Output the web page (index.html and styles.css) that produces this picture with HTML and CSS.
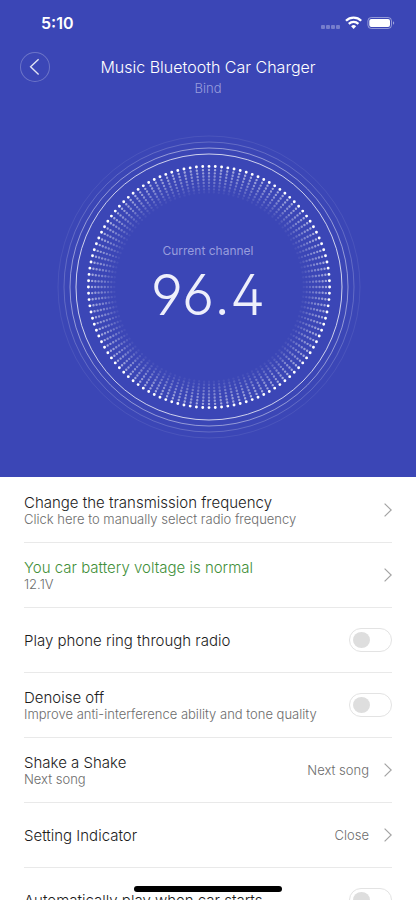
FILE: index.html
```html
<!DOCTYPE html>
<html lang="en">
<head>
<meta charset="utf-8">
<meta name="viewport" content="width=device-width, initial-scale=1">
<title>Music Bluetooth Car Charger</title>
<link rel="stylesheet" href="styles.css">
</head>
<body>
<header class="hero">
  <div class="status">
    <span class="clock">5:10</span>
    <svg class="status-icons" width="76" height="16" viewBox="0 0 76 16" aria-hidden="true">
      <g fill="#fff" fill-opacity=".3"><rect x="1" y="10" width="4" height="4" rx="1"/><rect x="6" y="10" width="4" height="4" rx="1"/><rect x="11" y="10" width="4" height="4" rx="1"/><rect x="16" y="10" width="4" height="4" rx="1"/></g>
      <g fill="none" stroke="#fff" stroke-width="2.3"><path d="M26 5.7a10.9 10.9 0 0 1 15.2 0"/><path d="M28.8 8.8a6.9 6.9 0 0 1 9.6 0"/></g>
      <path fill="#fff" d="M33.6 14l-2.5-2.7a3.6 3.6 0 0 1 5 0z"/>
      <rect x="47.9" y="2.5" width="23.6" height="11" rx="3.4" fill="none" stroke="#fff" stroke-opacity=".45"/>
      <rect x="49.3" y="4" width="20.7" height="8" rx="2" fill="#fff"/>
      <path d="M73 6.2q1.2.5 1.2 1.8T73 9.8z" fill="#fff" fill-opacity=".5"/>
    </svg>
  </div>
  <div class="titlebar">
    <button class="back" type="button" aria-label="Back">
      <svg width="30" height="30" viewBox="0 0 30 30" aria-hidden="true"><path d="M18.6 7.2L10.6 14.8l8 7.6" fill="none" stroke="#fff" stroke-opacity=".85" stroke-width="1.4"/></svg>
    </button>
    <div class="heading">
      <h1>Music Bluetooth Car Charger</h1>
      <p>Bind</p>
    </div>
  </div>
  <div class="dial">
    <svg class="rings" viewBox="-154 -153 306 306" aria-hidden="true">
      <g fill="none" stroke="#fff">
        <circle r="133" stroke-opacity=".75"/>
        <circle r="139" stroke-opacity=".45"/>
        <circle r="145" stroke-opacity=".2"/>
        <circle r="151" stroke-opacity=".08"/>
      </g>
      <g class="dots">
        <circle r="120.6" pathLength="120" class="lit"/>
        <circle r="117" pathLength="120" stroke-opacity=".52"/>
        <circle r="113.8" pathLength="120" stroke-opacity=".46"/>
        <circle r="110.6" pathLength="120" stroke-opacity=".4"/>
        <circle r="107.4" pathLength="120" stroke-opacity=".34"/>
        <circle r="104.2" pathLength="120" stroke-opacity=".28"/>
        <circle r="101" pathLength="120" stroke-opacity=".2"/>
        <circle r="97.8" pathLength="120" stroke-opacity=".13"/>
        <circle r="94.8" pathLength="120" stroke-opacity=".06"/>
      </g>
    </svg>
    <div class="reading">
      <span class="caption">Current channel</span>
      <span class="channel">96.4</span>
    </div>
  </div>
</header>
<main class="settings">
  <a class="row" href="#frequency">
    <span class="label"><span class="name">Change the transmission frequency</span><span class="note">Click here to manually select radio frequency</span></span>
    <svg class="chevron" viewBox="0 0 8 14" aria-hidden="true"><path d="M.6.6L7.2 7 .6 13.4"/></svg>
  </a>
  <a class="row" href="#battery">
    <span class="label"><span class="name good">You car battery voltage is normal</span><span class="note">12.1V</span></span>
    <svg class="chevron" viewBox="0 0 8 14" aria-hidden="true"><path d="M.6.6L7.2 7 .6 13.4"/></svg>
  </a>
  <label class="row" for="ring">
    <span class="label"><span class="name">Play phone ring through radio</span></span>
    <input class="switch" type="checkbox" id="ring">
  </label>
  <label class="row" for="denoise">
    <span class="label"><span class="name">Denoise off</span><span class="note">Improve anti-interference ability and tone quality</span></span>
    <input class="switch" type="checkbox" id="denoise">
  </label>
  <a class="row" href="#shake">
    <span class="label"><span class="name">Shake a Shake</span><span class="note">Next song</span></span>
    <span class="value">Next song</span>
    <svg class="chevron" viewBox="0 0 8 14" aria-hidden="true"><path d="M.6.6L7.2 7 .6 13.4"/></svg>
  </a>
  <a class="row" href="#indicator">
    <span class="label"><span class="name">Setting Indicator</span></span>
    <span class="value">Close</span>
    <svg class="chevron" viewBox="0 0 8 14" aria-hidden="true"><path d="M.6.6L7.2 7 .6 13.4"/></svg>
  </a>
  <label class="row" for="autoplay">
    <span class="label"><span class="name">Automatically play when car starts</span></span>
    <input class="switch" type="checkbox" id="autoplay">
  </label>
</main>
<div class="home-indicator"></div>
</body>
</html>
```
FILE: styles.css
```css
* { box-sizing: border-box; }
html, body { height: 100%; }
body {
  margin: 0;
  overflow: hidden;
  background: #fff;
  color: #1c1c1c;
  font-family: Inter, "Liberation Sans", sans-serif;
  font-weight: 300;
}
h1, p { margin: 0; font-weight: 300; }

.hero { background: #3b46b6; color: #fff; padding-bottom: 37px; }
.status {
  display: flex;
  justify-content: space-between;
  align-items: center;
  height: 46px;
  padding: 0 20px 0 41px;
}
.clock { font-size: 16px; font-weight: 600; line-height: 20px; }
.titlebar {
  display: grid;
  grid-template-columns: 30px 1fr 30px;
  align-items: start;
  padding: 6px 20px 0;
}
.back {
  width: 30px;
  height: 30px;
  padding: 0;
  border: 0;
  border-radius: 50%;
  background: none;
  box-shadow: inset 0 0 0 1px rgba(255, 255, 255, .25);
}
.back svg { display: block; }
.heading { text-align: center; padding-top: 4px; }
.heading h1 { font-size: 16px; line-height: 22px; color: #fff; }
.heading p { font-size: 13px; line-height: 20px; color: #989ddd; }

.dial {
  display: grid;
  place-items: center;
  width: 306px;
  margin: 36px auto 0;
}
.rings, .reading { grid-area: 1 / 1; }
.rings { display: block; width: 100%; }
.dots circle {
  fill: none;
  stroke: #fff;
  stroke-width: 2.4;
  stroke-linecap: round;
  stroke-dasharray: 0 1;
}
.dots .lit { stroke-width: 2.9; }
.reading { display: flex; flex-direction: column; align-items: center; }
.caption { font-size: 12px; line-height: 16px; font-weight: 400; color: #989ddd; }
.channel {
  font-size: 56px;
  line-height: 72px;
  color: #eeeffb;
  font-feature-settings: "cv02", "cv03", "cv04";
}

.settings { padding: 1px 24px 0; }
.row {
  display: flex;
  align-items: center;
  min-height: 65px;
  border-bottom: 1px solid #e9e9e9;
  color: inherit;
  text-decoration: none;
}
.label { flex: 1; display: flex; flex-direction: column; }
.name { font-size: 15px; line-height: 17px; }
.good { color: #3f8f39; }
.note, .value { font-size: 13px; line-height: 16px; color: #6c6c6c; }
.value { margin-right: 15px; }
.chevron { width: 8px; height: 14px; fill: none; stroke: #a3a3a3; stroke-width: 1.2; }
.switch {
  appearance: none;
  width: 43px;
  height: 24px;
  margin: 0;
  padding: 3px;
  border: 1px solid #e3e3e3;
  border-radius: 12px;
  background: #fff;
}
.switch::before {
  content: "";
  display: block;
  width: 17px;
  height: 16px;
  border-radius: 50%;
  background: #dedede;
}
.switch:checked::before { margin-left: auto; background: #3b46b6; }
.home-indicator {
  position: fixed;
  bottom: 8px;
  left: 50%;
  width: 148px;
  height: 6px;
  border-radius: 3px;
  background: #000;
  transform: translateX(-50%);
}
```
